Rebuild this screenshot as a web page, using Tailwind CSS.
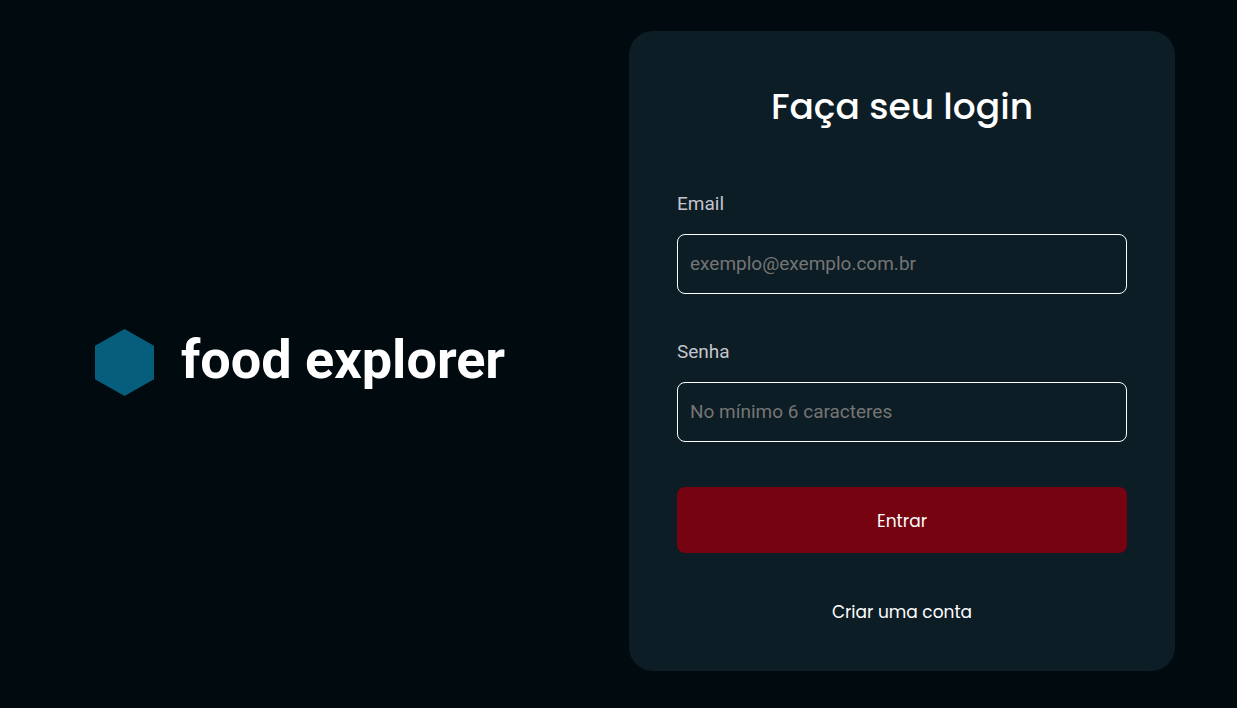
<!DOCTYPE html>
<html lang="pt-BR">
<head>
<meta charset="utf-8">
<meta name="viewport" content="width=device-width, initial-scale=1">
<title>food explorer</title>
<script src="https://cdn.jsdelivr.net/npm/@tailwindcss/browser@4"></script>
</head>
<body class="bg-[#000a0f] font-['Roboto',sans-serif] text-white">
<main class="flex min-h-screen flex-wrap items-start justify-between gap-8 pt-[31px] pr-[62px] pb-8 pl-[95px]">
  <div class="flex items-center gap-[27px] self-center pt-[18px]">
    <svg class="h-[67px] w-[59px] shrink-0" viewBox="0 0 59 67" aria-hidden="true"><path d="M29.5 0 59 16.8V50.2L29.5 67 0 50.2V16.8Z" fill="#065e7c"/></svg>
    <h1 class="pb-1.5 text-[54px] leading-[64px] font-bold whitespace-nowrap">food explorer</h1>
  </div>
  <section class="w-full max-w-[546px] rounded-3xl bg-[#0d1d25] px-12 pt-12 pb-[45px]">
    <h2 class="text-center font-['Poppins','Inter',sans-serif] text-[36px] leading-[56px] font-medium">Faça seu login</h2>
    <form class="mt-14 flex flex-col gap-[45px]">
      <div class="flex flex-col gap-[17px]">
        <label for="email" class="text-[19px] leading-[26px] text-[#c4c4cc]">Email</label>
        <input id="email" type="email" placeholder="exemplo@exemplo.com.br" class="h-[60px] w-full rounded-lg border border-white bg-transparent px-3 pb-0.5 text-[19px] placeholder:text-[#757575]">
      </div>
      <div class="flex flex-col gap-[17px]">
        <label for="senha" class="text-[19px] leading-[26px] text-[#c4c4cc]">Senha</label>
        <input id="senha" type="password" placeholder="No mínimo 6 caracteres" class="h-[60px] w-full rounded-lg border border-white bg-transparent px-3 pb-0.5 text-[19px] placeholder:text-[#757575]">
      </div>
      <button type="submit" class="h-[66px] rounded-lg bg-[#750310] pt-0.5 font-['Poppins','Inter',sans-serif] text-[17px] leading-[28px]">Entrar</button>
      <a href="#" class="self-center font-['Poppins','Inter',sans-serif] text-[17px] leading-[28px]">Criar uma conta</a>
    </form>
  </section>
</main>
</body>
</html>
